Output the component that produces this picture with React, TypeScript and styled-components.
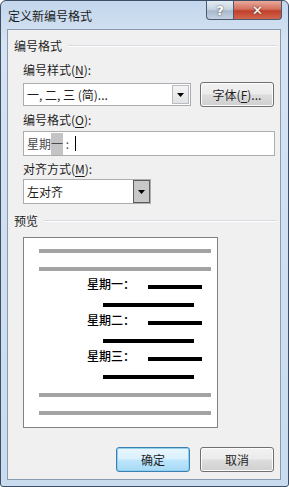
import React from "react";
import styled, { createGlobalStyle } from "styled-components";

const GlobalStyle = createGlobalStyle`
  html, body {
    margin: 0;
    padding: 0;
    background: #ffffff;
  }
  body {
    font-family: "Noto Sans CJK SC", "Liberation Sans", sans-serif;
    font-size: 12px;
    color: #1e1e1e;
  }
`;

const FONT = `"Noto Sans CJK SC", "Liberation Sans", sans-serif`;

const Window = styled.div`
  box-sizing: border-box;
  width: 289px;
  height: 487px;
  border: 1px solid #3d4f66;
  border-radius: 6px 6px 3px 3px;
  background: linear-gradient(180deg, #c3d6ec 0%, #d5e3f2 40px, #c9dbee 100%);
  display: flex;
  flex-direction: column;
  padding: 0 7px 6px 6px;
  overflow: hidden;
`;

const TitleBar = styled.div`
  height: 28px;
  display: flex;
  justify-content: space-between;
  align-items: flex-start;
`;

const Title = styled.div`
  font-family: ${FONT};
  font-size: 12px;
  line-height: 14px;
  padding: 8px 0 0 1px;
  color: #1a1a1a;
`;

const Caption = styled.div`
  display: flex;
  margin-right: -1px;
`;

const CapButton = styled.div<{ $close?: boolean }>`
  box-sizing: border-box;
  width: ${(p) => (p.$close ? "48px" : "28px")};
  height: 19px;
  display: flex;
  align-items: center;
  justify-content: center;
  border: 1px solid #4b5a6e;
  border-top: none;
  border-left: ${(p) => (p.$close ? "none" : "1px solid #4b5a6e")};
  border-radius: ${(p) => (p.$close ? "0 0 4px 0" : "0 0 0 4px")};
  background: ${(p) =>
    p.$close
      ? "linear-gradient(180deg, #e9a99b 0%, #d4705c 45%, #c0402a 55%, #d2664e 100%)"
      : "linear-gradient(180deg, #e4ebf4 0%, #c9d5e3 45%, #a9b9cd 55%, #c2d0e0 100%)"};
  color: #ffffff;
  font-family: "DejaVu Sans", sans-serif;
  font-weight: bold;
  font-size: 13px;
  text-shadow: 0 0 2px #3a3a3a;
`;

const Client = styled.div`
  flex: 1;
  border: 1px solid #8a9bb0;
  background: #f0f0f0;
  display: flex;
  flex-direction: column;
  padding: 8px 0 0 0;
`;

const GroupHeader = styled.div<{ $mt?: number }>`
  display: flex;
  align-items: center;
  gap: 6px;
  padding-left: 6px;
  margin-top: ${(p) => p.$mt ?? 0}px;
  margin-right: 3px;
  height: 16px;
  line-height: 16px;
  font-family: ${FONT};
  &::after {
    content: "";
    flex: 1;
    height: 1px;
    background: #d5dbe0;
    border-bottom: 1px solid #ffffff;
  }
`;

const Section = styled.div`
  display: flex;
  flex-direction: column;
  padding-left: 15px;
`;

const Label = styled.div<{ $mt: number }>`
  margin-top: ${(p) => p.$mt}px;
  height: 16px;
  line-height: 16px;
  font-family: ${FONT};
  color: #1e1e1e;
  u {
    text-decoration: underline;
    text-underline-offset: 2px;
  }
`;

const Row = styled.div<{ $mt: number }>`
  display: flex;
  align-items: center;
  margin-top: ${(p) => p.$mt}px;
`;

const Combo = styled.div<{ $w: number; $h: number }>`
  box-sizing: border-box;
  width: ${(p) => p.$w}px;
  height: ${(p) => p.$h}px;
  border: 1px solid #abadb3;
  background: #ffffff;
  display: flex;
  align-items: stretch;
`;

const ComboText = styled.div`
  flex: 1;
  padding-left: 3px;
  display: flex;
  align-items: center;
  font-family: ${FONT};
  font-size: 12px;
  color: #1e1e1e;
`;

const DropBtn = styled.div<{ $hot?: boolean }>`
  box-sizing: border-box;
  width: 17px;
  margin: ${(p) => (p.$hot ? "0" : "1px")};
  border: 1px solid ${(p) => (p.$hot ? "#5c5c5c" : "#b8bcc3")};
  background: ${(p) =>
    p.$hot ? "#c8c8c8" : "linear-gradient(180deg, #f4f4f4 0%, #e3e3e3 100%)"};
  display: flex;
  align-items: center;
  justify-content: center;
`;

const Arrow = () => (
  <svg width="7" height="4" viewBox="0 0 7 4">
    <path d="M0 0 H7 L3.5 4 Z" fill="#000" />
  </svg>
);

const Button = styled.div<{ $default?: boolean; $ml?: number }>`
  box-sizing: border-box;
  width: 74px;
  height: 25px;
  margin-left: ${(p) => p.$ml ?? 0}px;
  border: 1px solid ${(p) => (p.$default ? "#3c7fb1" : "#707070")};
  border-radius: 3px;
  background: ${(p) =>
    p.$default
      ? "linear-gradient(180deg, #eaf6fd 0%, #d9f0fc 48%, #bee6fd 52%, #a7d9f5 100%)"
      : "linear-gradient(180deg, #f2f2f2 0%, #ebebeb 48%, #dddddd 52%, #cfcfcf 100%)"};
  box-shadow: inset 0 0 0 1px ${(p) => (p.$default ? "#8fd0ef" : "#fcfcfc")};
  display: flex;
  align-items: center;
  justify-content: center;
  font-family: ${FONT};
  font-size: 12px;
  color: #1e1e1e;
  u {
    text-decoration: underline;
    text-underline-offset: 2px;
  }
`;

const TextBox = styled.div`
  box-sizing: border-box;
  width: 252px;
  height: 25px;
  margin-top: 3px;
  border: 1px solid #abadb3;
  background: #ffffff;
  display: flex;
  align-items: center;
  padding-left: 3px;
  font-family: ${FONT};
  font-size: 12px;
  color: #4a4a4a;
`;

const Selected = styled.span`
  background: #c4c4c4;
  color: #4a4a4a;
  padding: 2px 0 3px;
`;

const Caret = styled.span`
  display: inline-block;
  width: 1px;
  height: 15px;
  background: #000;
  margin-left: 6px;
`;

const Preview = styled.div`
  box-sizing: border-box;
  width: 195px;
  height: 191px;
  margin-top: 8px;
  border: 1px solid #828282;
  background: #ffffff;
  display: flex;
  flex-direction: column;
`;

const Bar = styled.div<{ $mt: number; $ml: number; $w: number; $gray?: boolean }>`
  height: 4px;
  width: ${(p) => p.$w}px;
  margin-top: ${(p) => p.$mt}px;
  margin-left: ${(p) => p.$ml}px;
  background: ${(p) => (p.$gray ? "#a3a3a3" : "#000000")};
  flex-shrink: 0;
`;

const NumRow = styled.div<{ $mt: number }>`
  display: flex;
  height: 14px;
  margin-top: ${(p) => p.$mt}px;
  margin-left: 63px;
  flex-shrink: 0;
`;

const NumText = styled.div`
  width: 48px;
  line-height: 14px;
  font-family: ${FONT};
  font-size: 12px;
  font-weight: 500;
  color: #000;
`;

const NumBar = styled.div`
  align-self: flex-end;
  margin: 0 0 2px 13px;
  width: 54px;
  height: 4px;
  background: #000;
`;

const Footer = styled.div`
  display: flex;
  justify-content: flex-end;
  margin-top: 19px;
  padding-right: 6px;
`;

const days = ["星期一：", "星期二：", "星期三："];

export default function App() {
  return (
    <>
      <GlobalStyle />
      <Window>
        <TitleBar>
          <Title>定义新编号格式</Title>
          <Caption>
            <CapButton>?</CapButton>
            <CapButton $close>✕</CapButton>
          </Caption>
        </TitleBar>
        <Client>
          <GroupHeader>编号格式</GroupHeader>
          <Section>
            <Label $mt={8}>
              编号样式(<u>N</u>):
            </Label>
            <Row $mt={4}>
              <Combo $w={168} $h={23}>
                <ComboText>一, 二, 三 (简)...</ComboText>
                <DropBtn>
                  <Arrow />
                </DropBtn>
              </Combo>
              <Button $ml={9}>
                字体(<u>F</u>)...
              </Button>
            </Row>
            <Label $mt={5}>
              编号格式(<u>O</u>):
            </Label>
            <TextBox>
              星期<Selected>一</Selected>&nbsp;:<Caret />
            </TextBox>
            <Label $mt={5}>
              对齐方式(<u>M</u>):
            </Label>
            <Row $mt={2}>
              <Combo $w={128} $h={25}>
                <ComboText>左对齐</ComboText>
                <DropBtn $hot>
                  <Arrow />
                </DropBtn>
              </Combo>
            </Row>
          </Section>
          <GroupHeader $mt={9}>预览</GroupHeader>
          <Section>
            <Preview>
              <Bar $gray $mt={11} $ml={15} $w={172} />
              <Bar $gray $mt={14} $ml={15} $w={172} />
              {days.map((d) => (
                <React.Fragment key={d}>
                  <NumRow $mt={6}>
                    <NumText>{d}</NumText>
                    <NumBar />
                  </NumRow>
                  <Bar $mt={12} $ml={79} $w={91} />
                </React.Fragment>
              ))}
              <Bar $gray $mt={14} $ml={15} $w={172} />
              <Bar $gray $mt={14} $ml={15} $w={172} />
            </Preview>
          </Section>
          <Footer>
            <Button $default>确定</Button>
            <Button $ml={10}>取消</Button>
          </Footer>
        </Client>
      </Window>
    </>
  );
}
